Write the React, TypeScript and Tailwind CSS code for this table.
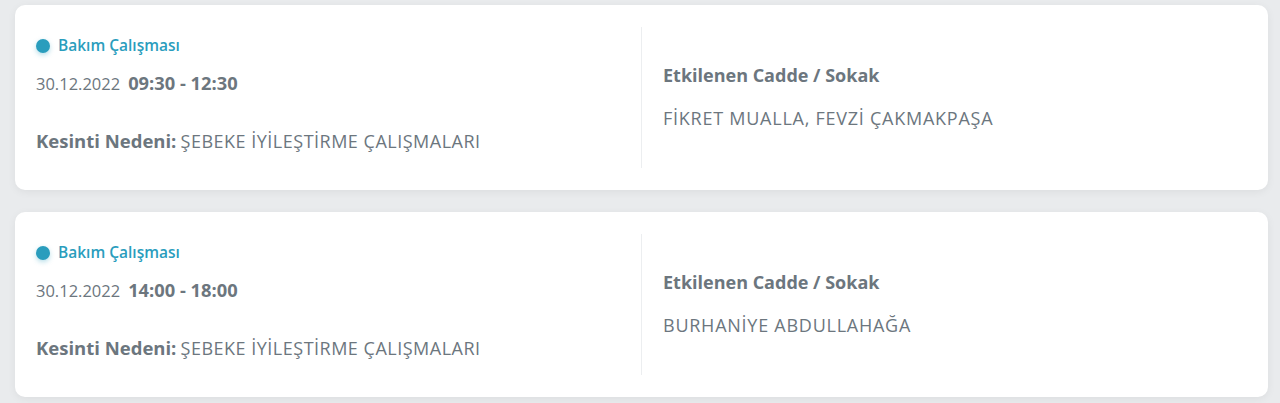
import React from "react";

type Outage = {
  date: string;
  time: string;
  reason: string;
  streets: string;
};

const outages: Outage[] = [
  {
    date: "30.12.2022",
    time: "09:30 - 12:30",
    reason: "ŞEBEKE İYİLEŞTİRME ÇALIŞMALARI",
    streets: "FİKRET MUALLA, FEVZİ ÇAKMAKPAŞA",
  },
  {
    date: "30.12.2022",
    time: "14:00 - 18:00",
    reason: "ŞEBEKE İYİLEŞTİRME ÇALIŞMALARI",
    streets: "BURHANİYE ABDULLAHAĞA",
  },
];

const OutageCard = ({ o }: { o: Outage }) => (
  <div className="bg-white rounded-[10px] shadow-[0_2px_8px_rgba(0,0,0,0.06)] px-[21px] py-[22px] grid grid-cols-[605px_1fr]">
    {/* Left: type, time, reason */}
    <div className="flex flex-col h-[141px]">
      <div className="mt-[9px] h-5 flex items-center gap-[8px]">
        <span className="w-[14px] h-[14px] rounded-full bg-[#2a9dbd] shadow-[0_2px_5px_rgba(42,157,189,0.35)]" />
        <span className="text-[15.5px] font-semibold text-[#2a9dbd]">Bakım Çalışması</span>
      </div>
      <p className="mt-[15px] h-6 leading-6 text-[#6c767e]">
        <span className="text-[16.5px]">{o.date}</span>
        <span className="ml-[8px] text-[18.3px] font-bold">{o.time}</span>
      </p>
      <p className="mt-[34px] h-6 leading-6 text-[#6c767e]">
        <span className="text-[18.5px] font-bold">Kesinti Nedeni:</span>{" "}
        <span className="text-[18px] tracking-[0.5px]">{o.reason}</span>
      </p>
    </div>

    {/* Right: affected streets */}
    <div className="border-l border-[#eceef0] pl-[21px] flex flex-col justify-center pb-[2px]">
      <p className="h-6 leading-6 text-[18px] font-bold text-[#6c767e]">Etkilenen Cadde / Sokak</p>
      <p className="mt-[19px] h-6 leading-6 text-[18px] tracking-[0.75px] text-[#6c767e]">{o.streets}</p>
    </div>
  </div>
);

export default function App() {
  return (
    <div
      className="min-h-screen bg-[#e9ebed] pl-[15px] pr-[12px] pt-[5px] flex flex-col gap-[22px]"
      style={{ fontFamily: '"Open Sans", sans-serif' }}
    >
      {outages.map((o, i) => (
        <OutageCard key={i} o={o} />
      ))}
    </div>
  );
}
